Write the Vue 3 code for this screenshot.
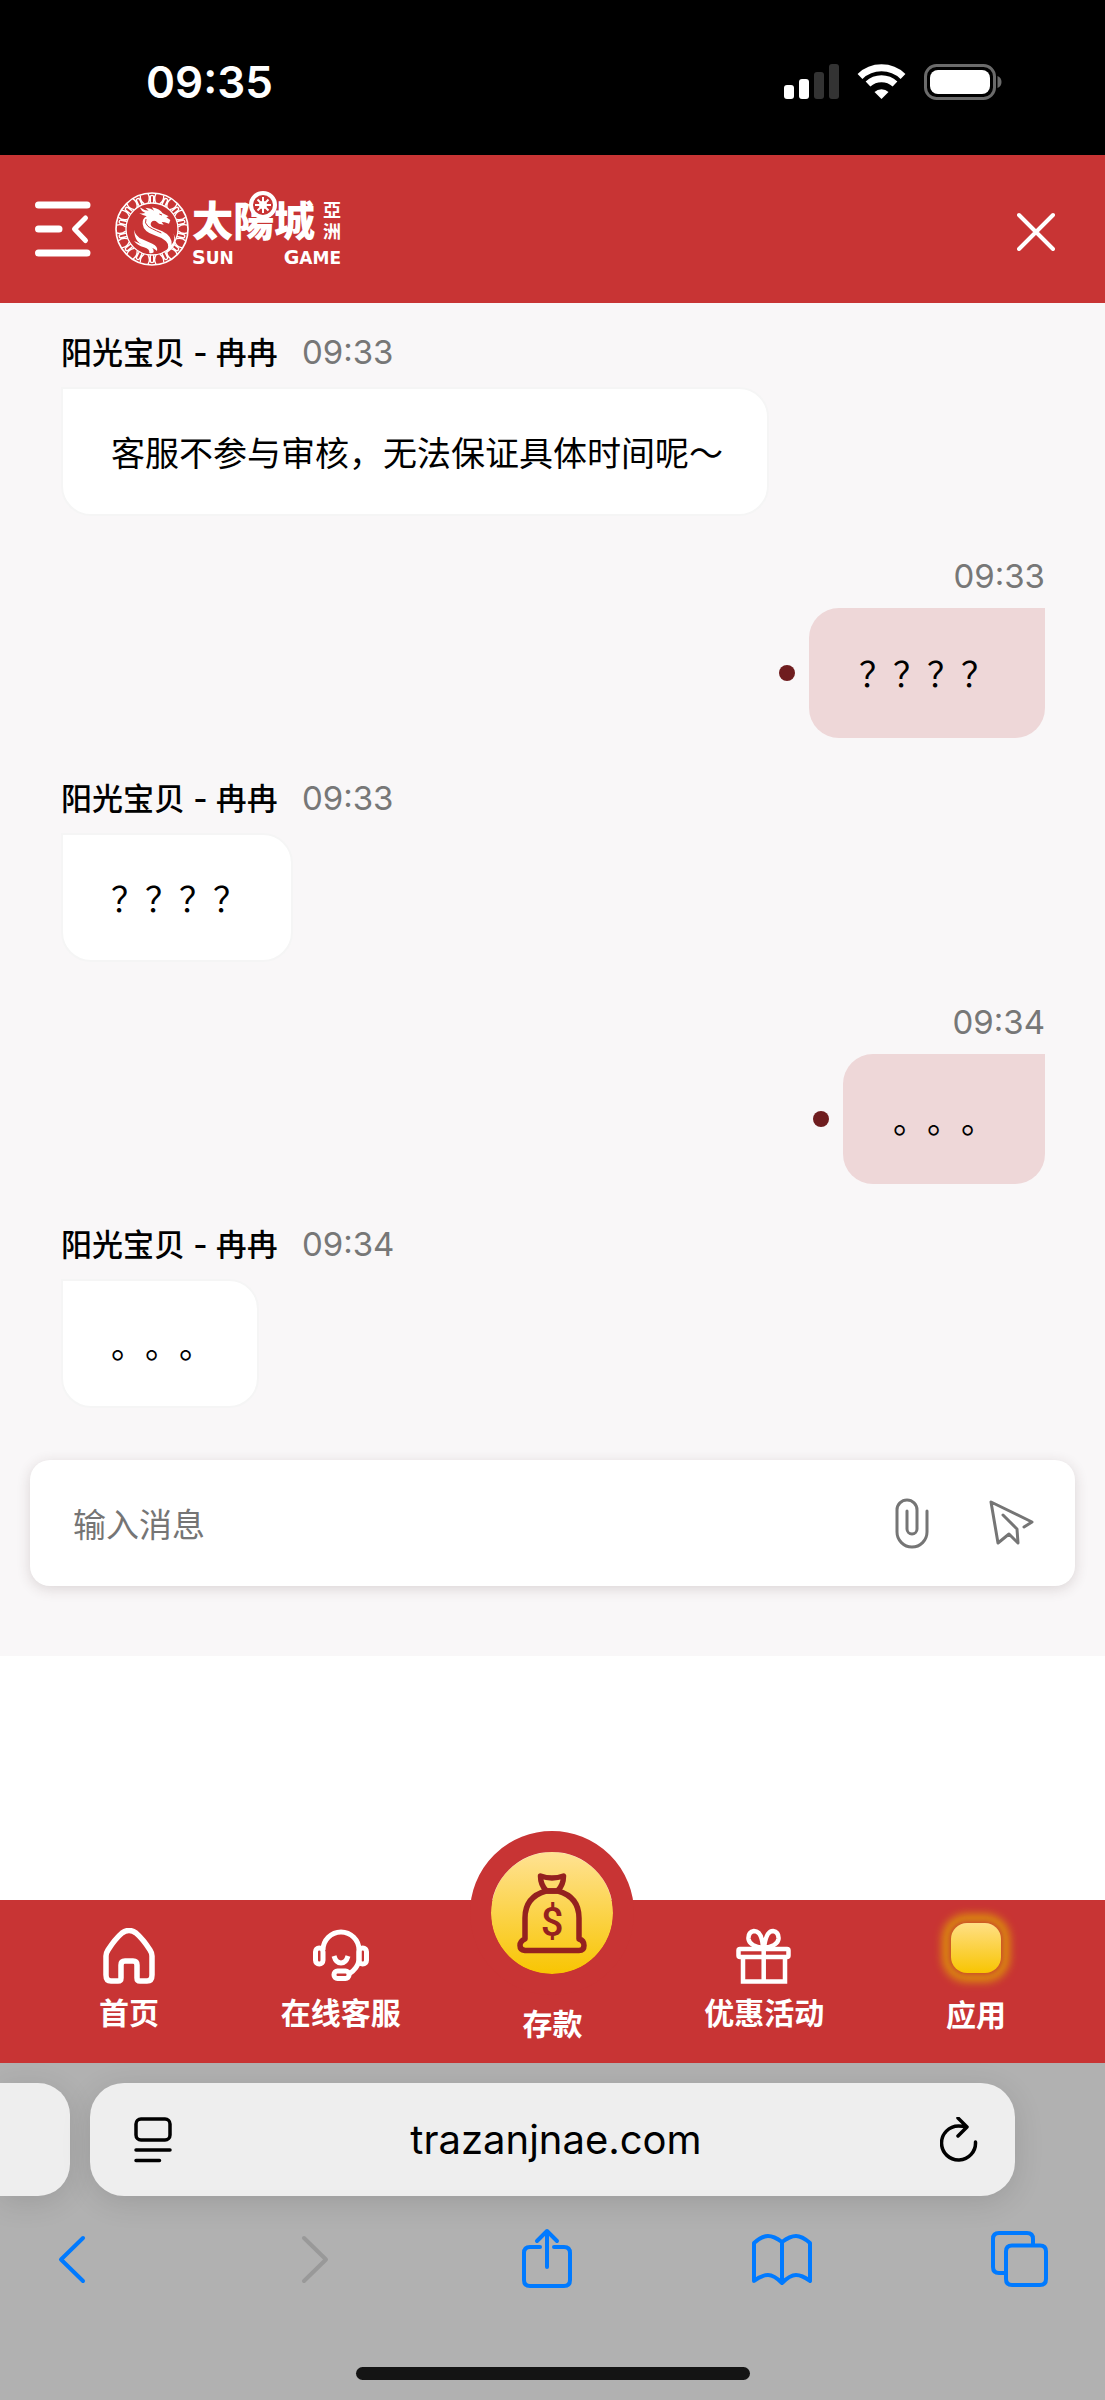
<template>
  <div class="phone">
    <div class="status-bar">
      <span class="clock">09:35</span>
      <div class="status-icons">
        <svg width="55" height="35" viewBox="0 0 55 35" fill="#fff">
          <rect x="0" y="21" width="10" height="14" rx="3" />
          <rect x="15" y="15" width="10" height="20" rx="3" />
          <rect x="30" y="8" width="10" height="27" rx="3" fill="#333" />
          <rect x="45" y="0" width="10" height="35" rx="3" fill="#333" />
        </svg>
        <svg width="49" height="35" viewBox="0 0 49 35" fill="none" stroke="#fff" stroke-width="7">
          <path d="M3 12.5A31 31 0 0 1 46 12.5" />
          <path d="M11 20A20 20 0 0 1 38 20" />
          <path d="M17.5 28a10 10 0 0 1 14 0L24.5 35z" fill="#fff" stroke="none" />
        </svg>
        <svg width="78" height="36" viewBox="0 0 78 36">
          <rect x="1.5" y="1.5" width="69" height="33" rx="11" fill="none" stroke="#6b6b6b" stroke-width="3" />
          <rect x="6" y="6" width="60" height="24" rx="8" fill="#fff" />
          <path d="M73.500 12q4 1.500 4 6t-4 6z" fill="#6b6b6b" />
        </svg>
      </div>
    </div>

    <header class="top-bar">
      <button class="icon-btn" type="button" aria-label="菜单">
        <svg width="56" height="56" viewBox="0 0 56 56" stroke="#fff" stroke-width="7" stroke-linecap="round" fill="none">
          <path d="M3.500 4h48.500M3.500 28H24M3.500 52h48.500" />
          <path d="M50.500 17 39.500 28l11 11.500" stroke-width="5" stroke-linejoin="round" />
        </svg>
      </button>

      <a class="logo" href="#">
        <svg class="emblem" width="76" height="76" viewBox="0 0 228 228" fill="none" stroke="#fff">
          <circle cx="114" cy="114" r="108" stroke-width="5" />
          <circle cx="114" cy="114" r="78" stroke-width="4" />
          <g v-for="n in 14" :key="n" :transform="`rotate(${n * 360 / 14} 114 114)`" stroke-width="4">
            <path d="M102 8q8 14 0 28M109 36V18q0-5 5-5t5 5v18M126 8q-8 14 0 28" />
          </g>
          <g fill="#fff" stroke="none">
            <path d="M80 50q10 8 24 9l-10-9q18 2 26 9l-6-10q24 5 32 18l18 9-7 3 12 8-4 11-13-4-9-1 6 8-14-3-10-8q-10-3-14 5-4 9 8 15l26 11q30 14 28 41 13-16 5-35 17 29-8 50-8 8-16 10 16-22 2-36-10-10-34-18-34-11-36-34-2-17 12-23-12-3-22-9 12 1 18-1-12-5-16-16z" />
            <path d="M61 116q2 19 24 29l30 13q18 9 14 22-8-9-26-12-44-10-42-52z" />
            <path d="M60 150q18 9 37 13 24 5 22 21-6 4-13 2 2-12-16-17-20-6-30-19z" />
          </g>
          <path d="M136 69l8 3M96 84q-6 12 6 22 8 6 40 20" stroke="#c83434" stroke-width="3" />
        </svg>
        <span class="wordmark">
          <span class="wordmark-top">
            <span class="brand">太陽城</span>
            <span class="region"><span>亞</span><span>洲</span></span>
            <svg class="wheel" width="30" height="30" viewBox="0 0 30 30">
              <circle cx="15" cy="15" r="12" fill="#c83434" stroke="#fff" stroke-width="4" />
              <path d="M15 7v16M7 15h16M9.500 9.500l11 11M20.500 9.500l-11 11" stroke="#fff" stroke-width="2" />
              <circle cx="15" cy="15" r="4" fill="#fff" />
            </svg>
          </span>
          <span class="latin"><span>S<small>UN</small></span><span>G<small>AME</small></span></span>
        </span>
      </a>

      <button class="icon-btn close" type="button" aria-label="关闭">
        <svg width="38" height="44" viewBox="0 0 38 44" stroke="#fff" stroke-width="4" stroke-linecap="round">
          <path d="M2 8l34 34M36 8L2 42" />
        </svg>
      </button>
    </header>

    <main class="chat">
      <div v-for="(msg, index) in messages" :key="index" :class="['message', msg.role]">
        <div class="meta">
          <span v-if="msg.role === 'agent'" class="name">{{ agentName }}</span>
          <time>{{ msg.time }}</time>
        </div>
        <div class="bubble-row">
          <i v-if="msg.role === 'user'" class="dot"></i>
          <p class="bubble">{{ msg.content }}</p>
        </div>
      </div>

      <form class="composer" @submit.prevent="sendMessage">
        <input v-model="newMessage" type="text" placeholder="输入消息" aria-label="输入消息">
        <button class="icon-btn" type="button" aria-label="附件">
          <svg width="34" height="51" viewBox="0 0 34 51" fill="none" stroke="#757575" stroke-width="3" stroke-linecap="round">
            <path d="M32 13v21a15 15 0 0 1-30 0V12a10 10 0 0 1 20 0v19a5 5 0 0 1-10 0V13" />
          </svg>
        </button>
        <button class="icon-btn" type="submit" aria-label="发送">
          <svg width="46" height="46" viewBox="0 0 46 46" fill="none" stroke="#757575" stroke-width="3" stroke-linecap="round" stroke-linejoin="round">
            <path d="M35 27l8-5L2 2l7 41 11-9 9 9-1-14-14-14" />
          </svg>
        </button>
      </form>
    </main>

    <div class="spacer"></div>

    <nav class="tab-bar">
      <a class="tab" href="#">
        <svg width="52" height="56" viewBox="0 0 52 56" fill="none" stroke="#fff" stroke-width="5.500">
          <path d="M18 50V37q0-4 4-4h8q4 0 4 4v13q0 3 3 3h7q5 0 5-6V28q0-3-2-6Q40 11 33 5q-7-5-14 0Q12 11 5 22q-2 3-2 6v19q0 6 5 6h7q3 0 3-3z" />
        </svg>
        <span>首页</span>
      </a>
      <a class="tab" href="#">
        <svg width="56" height="56" viewBox="0 0 56 56" fill="none" stroke="#fff" stroke-width="5">
          <path d="M10 22a18 18 0 0 1 36 0v10q-1 8-10 14" />
          <rect x="2.500" y="20" width="7.500" height="16" rx="3.700" />
          <rect x="46" y="20" width="7.500" height="16" rx="3.700" />
          <path d="M21 28q2 7 7 7t7-7" />
          <rect x="21" y="43" width="15" height="7.500" rx="3.500" />
        </svg>
        <span>在线客服</span>
      </a>
      <a class="tab deposit" href="#">
        <i class="coin">
          <svg width="70" height="81" viewBox="0 0 70 81" fill="none" stroke="#95211f" stroke-width="5.500" stroke-linejoin="round">
            <path d="M23.500 3q11.500 4 23 0 0 9-6 15H29.500q-6-6-6-15z" />
            <path d="M29 18Q8 24 8 45v21q-5 2-5 6.500T8 77.500h54q5 0 5-5T62 66V45Q62 24 41 18z" />
            <text x="35" y="63" text-anchor="middle" fill="#95211f" stroke="none">$</text>
          </svg>
        </i>
        <span>存款</span>
      </a>
      <a class="tab" href="#">
        <svg width="56" height="56" viewBox="0 0 56 56" fill="none" stroke="#fff" stroke-width="4.500">
          <rect x="2.500" y="21" width="50" height="8" rx="1.500" />
          <path d="M7 29v24.500h42V29M27.700 20v33" />
          <path d="M27 20Q26 3 18 3q-6 1-5.500 8 1 7 14.500 9zM28 20Q30 3 37 3q6 1 5.500 8-1 7-14.500 9z" />
        </svg>
        <span>优惠活动</span>
      </a>
      <a class="tab apps" href="#">
        <i class="app-tile"></i>
        <span>应用</span>
      </a>
    </nav>

    <footer class="browser">
      <div class="address-row">
        <div class="prev-tab"></div>
        <div class="address">
          <button class="icon-btn" type="button" aria-label="阅读器">
            <svg width="38" height="46" viewBox="0 0 38 46" fill="none" stroke="#000" stroke-width="3.500" stroke-linecap="round">
              <rect x="2" y="2" width="34" height="21" rx="5" />
              <path d="M2 33h34M2 43.500h23.500" />
            </svg>
          </button>
          <input v-model="url" type="text" aria-label="网址">
          <button class="icon-btn" type="button" aria-label="刷新">
            <svg width="38" height="46" viewBox="0 0 38 46" fill="none" stroke="#000" stroke-width="3.500" stroke-linecap="round" stroke-linejoin="round">
              <path d="M35.500 25A17 17 0 1 1 18.500 9q4 0 8 1M18 1l9 9-9 9" />
            </svg>
          </button>
        </div>
      </div>

      <div class="tools">
        <button v-for="tool in tools" :key="tool.label" class="icon-btn" type="button" :aria-label="tool.label" :disabled="tool.disabled">
          <svg width="60" height="60" viewBox="0 0 60 60" fill="none" stroke="currentColor" stroke-width="4" stroke-linecap="round" stroke-linejoin="round">
            <path :d="tool.path" />
          </svg>
        </button>
      </div>

      <div class="home-indicator"></div>
    </footer>
  </div>
</template>

<script setup>
import { ref } from 'vue'

const agentName = '阳光宝贝 - 冉冉'
const url = ref('trazanjnae.com')
const newMessage = ref('')

const messages = ref([
  { role: 'agent', time: '09:33', content: '客服不参与审核，无法保证具体时间呢～' },
  { role: 'user', time: '09:33', content: '？？？？' },
  { role: 'agent', time: '09:33', content: '？？？？' },
  { role: 'user', time: '09:34', content: '。。。' },
  { role: 'agent', time: '09:34', content: '。。。' },
])

const tools = [
  { label: '后退', path: 'M41 10 19 31.500 41 53' },
  { label: '前进', disabled: true, path: 'M25 10l22 21.500L25 53' },
  { label: '分享', path: 'M24 19H14q-6 0-6 6v27q0 6 6 6h34q6 0 6-6V25q0-6-6-6H38M31 39V3M21 13 31 3l10 10' },
  { label: '书签', path: 'M30 14Q22 8 16 8T2 15v38q8-6 14-6t14 8q8-8 14-8t14 6V15Q50 8 44 8t-14 6v41' },
  { label: '标签页', path: 'M16 45h-6q-6 0-6-6V11q0-6 6-6h28q6 0 6 6v6M23 17.500h28q6 0 6 6V51q0 6-6 6H23q-6 0-6-6V23.500q0-6 6-6z' },
]

const sendMessage = () => {
  const content = newMessage.value.trim()
  if (!content) return

  const time = new Date().toTimeString().slice(0, 5)
  messages.value.push({ role: 'user', time, content })
  newMessage.value = ''
}
</script>

<style>
body {
  margin: 0;
  background: #fff;
}
</style>

<style scoped>
.phone {
  display: flex;
  flex-direction: column;
  min-height: 100vh;
  font-family: Inter, "Noto Sans CJK SC", sans-serif;
  color: #000;
}

svg {
  display: block;
  flex: none;
}

.icon-btn {
  display: flex;
  padding: 0;
  border: none;
  background: none;
  color: inherit;
  cursor: pointer;
}

.status-bar {
  box-sizing: border-box;
  display: flex;
  align-items: center;
  justify-content: space-between;
  height: 155px;
  padding: 8px 103px 0 146px;
  background: #000;
}

.clock {
  color: #fff;
  font-size: 44px;
  font-weight: 600;
}

.status-icons {
  display: flex;
  align-items: center;
  gap: 18px;
}

/* HEADER */
.top-bar {
  display: flex;
  align-items: center;
  height: 148px;
  padding: 0 50px 0 35px;
  background: #c83434;
}

.logo {
  display: flex;
  align-items: center;
  gap: 2px;
  margin-left: 23px;
  color: #fff;
  text-decoration: none;
}

.wordmark {
  display: flex;
  flex-direction: column;
  padding-top: 8px;
}

.wordmark-top {
  position: relative;
  display: flex;
  align-items: center;
  gap: 8px;
  font-family: "Liberation Sans", "Noto Sans CJK TC", sans-serif;
}

.brand {
  font-size: 41px;
  font-weight: 900;
  line-height: 48px;
}

.region {
  display: flex;
  flex-direction: column;
  font-size: 18px;
  font-weight: 700;
  line-height: 21px;
}

.wheel {
  position: absolute;
  top: -8px;
  left: 56px;
}

.latin {
  display: flex;
  justify-content: space-between;
  font-family: "DejaVu Sans", sans-serif;
  font-size: 19px;
  font-weight: 700;
  line-height: 22px;
}

.latin small {
  font-size: 17px;
}

.close {
  margin-left: auto;
}

/* CHAT */
.chat {
  padding: 29px 0 70px;
  background: #f9f7f8;
}

.message {
  display: flex;
  flex-direction: column;
  gap: 15px;
  margin: 0 60px 40px 61px;
}

.message.user {
  gap: 12px;
}

.meta {
  display: flex;
  align-items: baseline;
  gap: 24px;
  height: 40px;
  line-height: 40px;
}

.name {
  font-size: 31px;
  font-weight: 500;
}

.meta time {
  color: #777;
  font-size: 33px;
}

.bubble-row {
  display: flex;
  align-items: center;
  gap: 14px;
}

.message.user .meta,
.message.user .bubble-row {
  justify-content: flex-end;
}

.dot {
  width: 16px;
  height: 16px;
  border-radius: 50%;
  background: #6f1d1f;
}

.bubble {
  margin: 0;
  padding: 41px 44px 40px 48px;
  border: 2px solid #f5f5f5;
  border-radius: 0 30px 30px 30px;
  background: #fff;
  font-family: "Noto Sans CJK SC", sans-serif;
  font-size: 34px;
  line-height: 44px;
  text-spacing-trim: space-all;
}

.message.user .bubble {
  padding: 43px 50px;
  border: none;
  border-radius: 30px 0 30px 30px;
  background: #eed7d8;
}

.composer {
  display: flex;
  align-items: center;
  gap: 60px;
  height: 126px;
  margin: 52px 30px 0;
  padding: 0 40px 0 43px;
  border-radius: 20px;
  background: #fff;
  box-shadow: 0 3px 14px rgba(60, 40, 40, 0.16);
}

.composer input {
  flex: 1;
  min-width: 0;
  padding: 0;
  border: none;
  outline: none;
  background: none;
  font-family: "Noto Sans CJK SC", sans-serif;
  font-size: 33px;
}

.composer input::placeholder {
  color: #757575;
}

.spacer {
  flex: 1;
  min-height: 90px;
}

/* TAB BAR */
.tab-bar {
  box-sizing: border-box;
  display: grid;
  grid-template-columns: repeat(5, 1fr);
  align-items: start;
  height: 163px;
  padding: 28px 23px 0;
  background: #c83434;
}

.tab {
  display: flex;
  flex-direction: column;
  align-items: center;
  gap: 9px;
  color: #fff;
  font-family: "Noto Sans CJK SC", sans-serif;
  font-size: 30px;
  font-weight: 700;
  line-height: 36px;
  text-decoration: none;
}

.deposit {
  margin-top: -97px;
}

.coin {
  box-sizing: border-box;
  display: flex;
  align-items: center;
  justify-content: center;
  width: 164px;
  height: 164px;
  border: 21px solid #c83434;
  border-radius: 50%;
  background: linear-gradient(#ffe293, #f8c502) padding-box;
}

.coin text {
  font-family: Roboto, sans-serif;
  font-size: 40px;
  font-style: normal;
  font-weight: 500;
}

.apps {
  gap: 22px;
  margin-top: -5px;
}

.app-tile {
  width: 50px;
  height: 50px;
  border-radius: 16px;
  background: linear-gradient(#ffdf85, #f8c502);
  box-shadow: 0 0 5px 2px #c94a2c, 0 0 8px 9px #dc8d0f;
}

/* BROWSER */
.browser {
  display: flex;
  flex-direction: column;
  padding: 20px 0;
  background: #b1b1b1;
}

.address-row {
  display: flex;
  gap: 20px;
  height: 113px;
  padding-right: 90px;
}

.prev-tab {
  width: 70px;
  border-radius: 0 32px 32px 0;
  background: #eee;
  box-shadow: 0 6px 30px rgba(0, 0, 0, 0.12);
}

.address {
  flex: 1;
  display: flex;
  align-items: center;
  padding: 0 37px 0 44px;
  border-radius: 34px;
  background: #eee;
  box-shadow: 0 6px 30px rgba(0, 0, 0, 0.12);
}

.address input {
  flex: 1;
  min-width: 0;
  border: none;
  outline: none;
  background: none;
  font-family: Inter, sans-serif;
  font-size: 40px;
  text-align: center;
}

.tools {
  display: flex;
  justify-content: space-between;
  margin-top: 32px;
  padding: 0 56px 0 42px;
  color: #007aff;
}

.tools .icon-btn:disabled {
  color: #999;
  cursor: default;
}

.home-indicator {
  align-self: center;
  width: 394px;
  height: 13px;
  margin-top: 79px;
  border-radius: 7px;
  background: #141414;
}
</style>
